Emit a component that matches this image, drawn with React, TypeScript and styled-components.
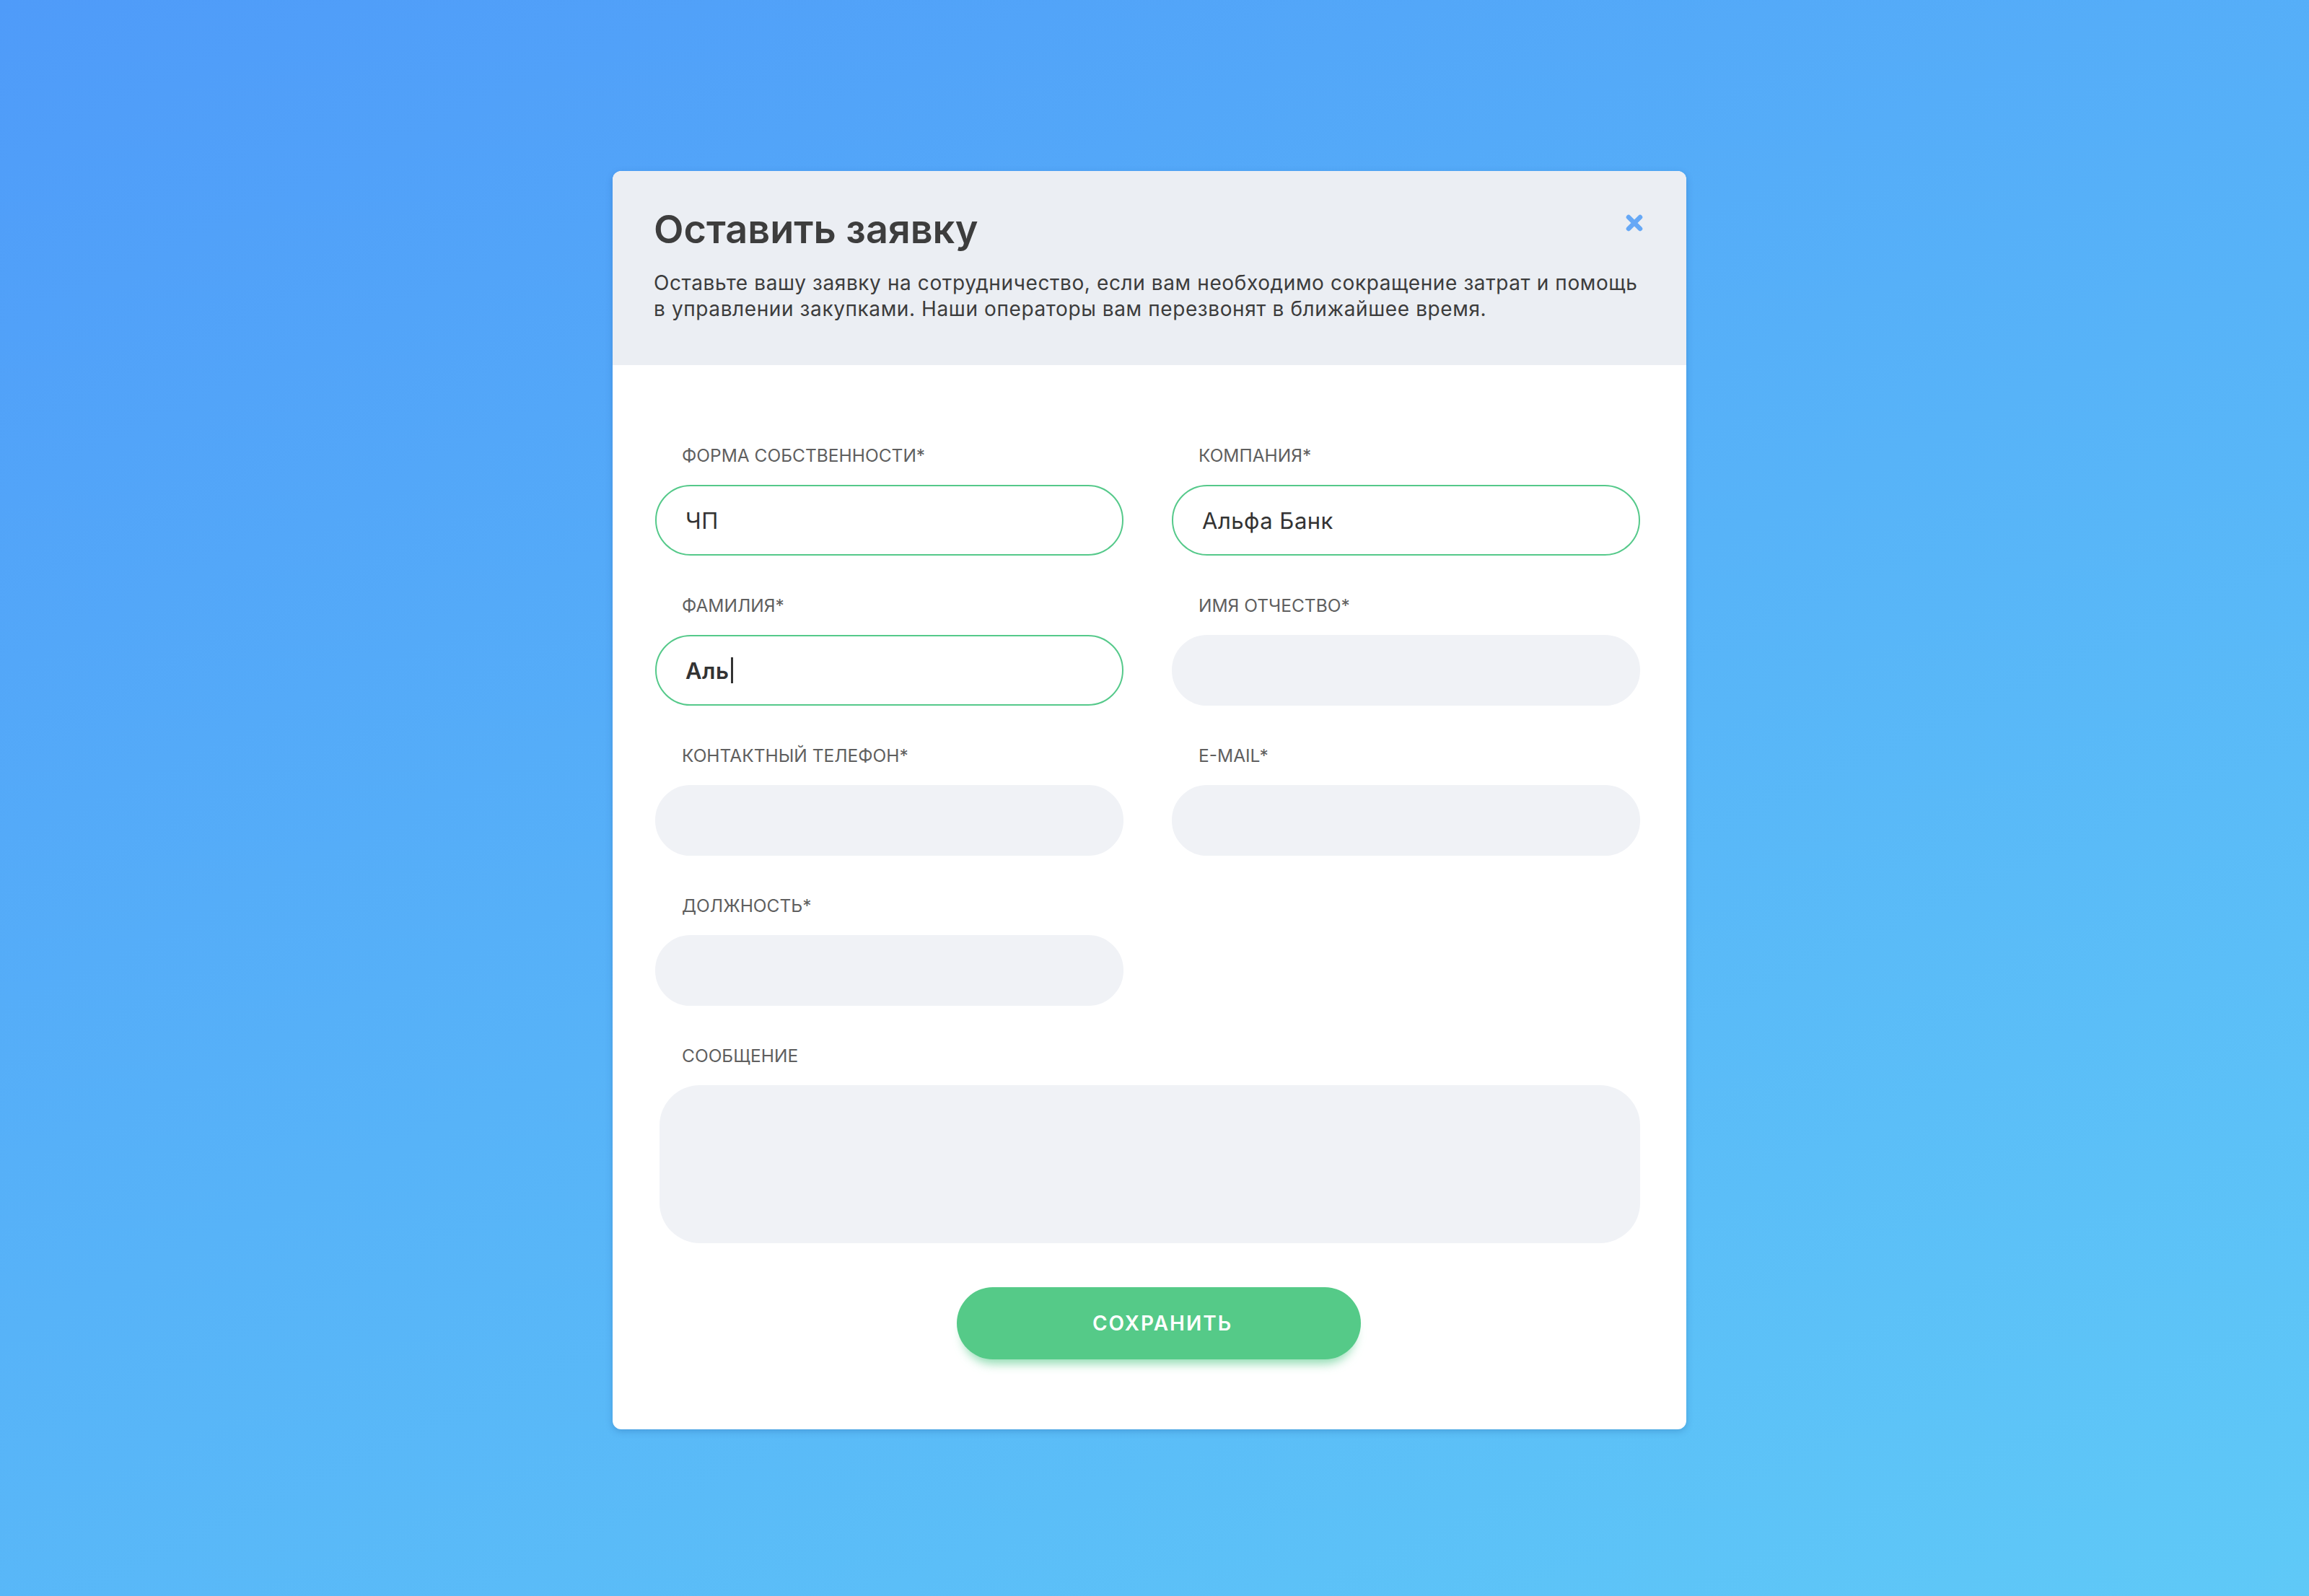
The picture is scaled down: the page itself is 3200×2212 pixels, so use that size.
import React from 'react'
import styled, { createGlobalStyle } from 'styled-components'

const GlobalStyle = createGlobalStyle`
  html, body {
    margin: 0;
    padding: 0;
  }

  body {
    min-height: 2212px;
    background: linear-gradient(155deg, #4f9bf9 0%, #57b3f8 50%, #5fc9f7 100%);
    font-family: Inter, "Noto Sans", sans-serif;
    color: #3c3c3c;
  }
`

const Page = styled.div`
  min-height: 2212px;
  box-sizing: border-box;
  padding: 237px 0 0 849px;
`

const Modal = styled.div`
  position: relative;
  width: 1488px;
  overflow: hidden;

  background: #fff;
  border-radius: 12px;
  box-shadow: 0 3px 10px rgba(20, 70, 140, 0.25);
`

const Header = styled.div`
  height: 269px;
  box-sizing: border-box;
  padding: 48px 60px 0 57px;

  background: #ebeef3;
`

const Title = styled.h2`
  margin: 0;

  font-size: 54px;
  line-height: 65px;
  font-weight: 600;
  color: #3d3d3d;
`

const Description = styled.p`
  margin: 24px 0 0;

  font-size: 28px;
  line-height: 36px;
  letter-spacing: 0.6px;
  color: #3c3c3c;
`

const CloseButton = styled.button`
  position: absolute;
  top: 59px;
  right: 59px;

  width: 26px;
  height: 26px;
  padding: 0;
  line-height: 0;

  background: none;
  border: none;
  cursor: pointer;
`

const Body = styled.form`
  display: grid;
  grid-template-columns: 1fr 1fr;
  column-gap: 67px;
  row-gap: 54px;

  padding: 110px 64px 0 59px;
`

const Field = styled.div<{ $wide?: boolean }>`
  display: flex;
  flex-direction: column;
  gap: 26px;

  grid-column: ${p => (p.$wide ? '1 / -1' : 'auto')};
`

const Label = styled.label`
  padding-left: 37px;

  font-size: 24.5px;
  line-height: 30px;
  text-transform: uppercase;
  color: #5f5f5f;
`

const InputShell = styled.div<{ $filled?: boolean }>`
  display: flex;
  align-items: center;

  height: 98px;
  box-sizing: border-box;
  padding: 0 40px;

  background: ${p => (p.$filled ? '#fff' : '#f0f2f6')};
  border: 2px solid ${p => (p.$filled ? '#55c98a' : '#f0f2f6')};
  border-radius: 49px;
`

const TextInput = styled.input`
  width: 100%;
  padding: 0;

  background: transparent;
  border: none;
  outline: none;

  font-family: inherit;
  font-size: 31px;
  letter-spacing: 0.5px;
  color: #333;
`

const Typed = styled.span`
  display: flex;
  align-items: center;

  font-size: 31px;
  font-weight: 600;
  letter-spacing: 0.5px;
  color: #333;
`

const Caret = styled.span`
  width: 3px;
  height: 36px;
  margin-left: 3px;

  background: #333;
`

const MessageArea = styled.textarea`
  height: 219px;
  margin-left: 6px;
  box-sizing: border-box;
  padding: 30px 40px;
  resize: none;

  background: #f0f2f6;
  border: none;
  border-radius: 56px;
  outline: none;

  font-family: inherit;
  font-size: 30px;
`

const Actions = styled.div`
  grid-column: 1 / -1;
  display: flex;
  justify-content: center;

  padding: 7px 0 97px 31px;
`

const SubmitButton = styled.button`
  width: 560px;
  height: 100px;
  padding: 0 0 0 10px;

  background: #55ca88;
  border: none;
  border-radius: 50px;
  box-shadow: 0 14px 14px -8px rgba(85, 202, 136, 0.65);

  font-family: inherit;
  font-size: 28px;
  font-weight: 600;
  letter-spacing: 2px;
  text-transform: uppercase;
  color: #fff;
  cursor: pointer;
`

const CloseIcon = () => (
  <svg width="26" height="26" viewBox="0 0 26 26">
    <path
      d="M5 5 L21 21 M21 5 L5 21"
      stroke="#66a8f6"
      strokeWidth="6.5"
      strokeLinecap="round"
    />
  </svg>
)

interface InputFieldProps {
  label: string
  value?: string
  active?: boolean
}

const InputField: React.FC<InputFieldProps> = ({ label, value, active }) => (
  <Field>
    <Label>{label}</Label>
    <InputShell $filled={!!value}>
      {active ? (
        <Typed>
          {value}
          <Caret />
        </Typed>
      ) : (
        <TextInput value={value || ''} readOnly />
      )}
    </InputShell>
  </Field>
)

export default function App() {
  return (
    <>
      <GlobalStyle />
      <Page>
        <Modal>
          <Header>
            <Title>Оставить заявку</Title>
            <Description>
              Оставьте вашу заявку на сотрудничество, если вам необходимо сокращение затрат и помощь
              <br />
              в управлении закупками. Наши операторы вам перезвонят в ближайшее время.
            </Description>
          </Header>
          <CloseButton type="button" aria-label="Закрыть">
            <CloseIcon />
          </CloseButton>
          <Body>
            <InputField label="Форма собственности*" value="ЧП" />
            <InputField label="Компания*" value="Альфа Банк" />
            <InputField label="Фамилия*" value="Аль" active />
            <InputField label="Имя отчество*" />
            <InputField label="Контактный телефон*" />
            <InputField label="E-mail*" />
            <InputField label="Должность*" />
            <div />
            <Field $wide>
              <Label>Сообщение</Label>
              <MessageArea />
            </Field>
            <Actions>
              <SubmitButton type="button">Сохранить</SubmitButton>
            </Actions>
          </Body>
        </Modal>
      </Page>
    </>
  )
}
